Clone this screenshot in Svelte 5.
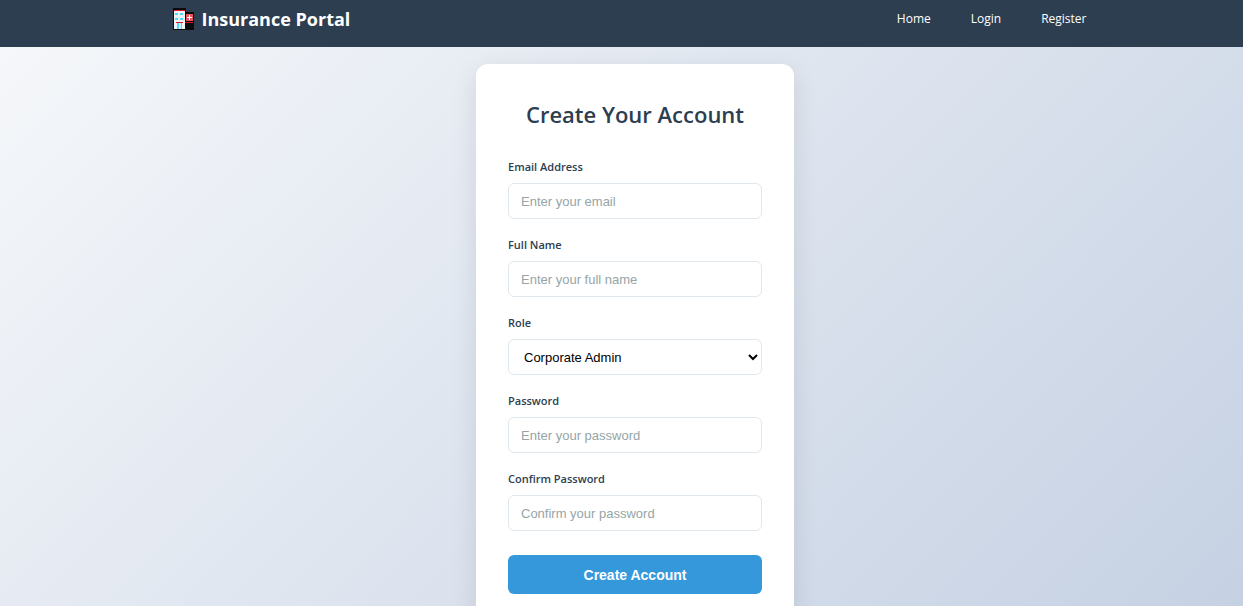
<script>
  const links = ['Home', 'Login', 'Register'];
  const first = [
    { id: 'email', label: 'Email Address', type: 'email', hint: 'Enter your email' },
    { id: 'name', label: 'Full Name', type: 'text', hint: 'Enter your full name' }
  ];
  const last = [
    { id: 'password', label: 'Password', type: 'password', hint: 'Enter your password' },
    { id: 'confirm', label: 'Confirm Password', type: 'password', hint: 'Confirm your password' }
  ];
</script>

{#snippet field(f)}
  <div class="group">
    <label for={f.id}>{f.label}</label>
    <input id={f.id} type={f.type} placeholder={f.hint} />
  </div>
{/snippet}

<header>
  <div class="bar">
    <a class="brand" href="#home">
      <svg width="22" height="22" viewBox="0 0 22 22" aria-hidden="true">
        <path d="M0 0h13v4h8v18H0z" fill="#0b0b0d" />
        <path d="M1 2h11v19H1z" fill="#eef3f6" />
        <path d="M1 2h11v1H1z" fill="#e81224" />
        <path d="M2 5h3v2H2zM7 5h3v2H7zM2 10h3v2H2zM7 10h3v2H7z" fill="#50d5ff" />
        <path d="M3 14h7v1H3z" fill="#e81224" />
        <path d="M4 15h5v6H4z" fill="#50d5ff" />
        <path d="M6 15h2v6H6z" fill="#c8f2ff" />
        <path d="M13 6h7v7h-7z" fill="#e8525f" />
        <path d="M16 7h1v2h2v1h-2v2h-1v-2h-2V9h2z" fill="#fff" />
        <path d="M12 14h8v1h-8z" fill="#e81224" />
      </svg>
      <span>Insurance Portal</span>
    </a>
    <nav>
      {#each links as l}<a href="#{l.toLowerCase()}">{l}</a>{/each}
    </nav>
  </div>
</header>
<main>
  <form class="card">
    <h1>Create Your Account</h1>
    {#each first as f}{@render field(f)}{/each}
    <div class="group">
      <label for="role">Role</label>
      <select id="role"><option>Corporate Admin</option></select>
    </div>
    {#each last as f}{@render field(f)}{/each}
    <button type="submit">Create Account</button>
  </form>
</main>

<style>
  :global(*) { box-sizing: border-box; }
  :global(html) { scrollbar-width: none; }
  :global(body) { font-family: "Segoe UI", "Open Sans", "Noto Sans", sans-serif; color: #2c3e50; }
  header { background: #2c3e50; height: 47px; padding: 0 0 0 16px; }
  .bar { max-width: 954px; margin: 0 auto; padding: 0 20px; display: flex; justify-content: space-between; }
  .brand { display: flex; align-items: center; gap: 7px; height: 38px; color: #fff; font-size: 18px; font-weight: 700; text-decoration: none; }
  nav { display: flex; align-items: center; gap: 40px; height: 36px; }
  nav a { color: #fff; font-size: 12px; text-decoration: none; }
  main { min-height: calc(100vh - 47px); display: flex; justify-content: center; padding: 17px 0 17px 27px; background: linear-gradient(135deg, #f5f7fa 0%, #c3cfe2 100%); }
  .card { width: 318px; padding: 32px 32px 80px; background: #fff; border-radius: 12px; box-shadow: 0 8px 26px rgba(0, 0, 0, 0.1); }
  h1 { margin: 0 0 27px; font-size: 22px; line-height: 36px; font-weight: 600; text-align: center; }
  .group { margin-bottom: 18px; }
  label { display: block; margin-bottom: 8px; font-size: 11px; line-height: 16px; font-weight: 600; }
  input, select { display: block; width: 100%; height: 36px; padding: 0 12px; border: 1px solid #e1e8ed; border-radius: 6px; background: #fff; color: #000; font: 13px "Liberation Sans", Arial, sans-serif; }
  select { padding: 0 11px; }
  input::placeholder { color: #95a5a6; }
  button { display: block; width: 100%; height: 39px; margin-top: 24px; border: 0; border-radius: 6px; background: #3498db; color: #fff; font: 700 14px "Liberation Sans", Arial, sans-serif; }
</style>
